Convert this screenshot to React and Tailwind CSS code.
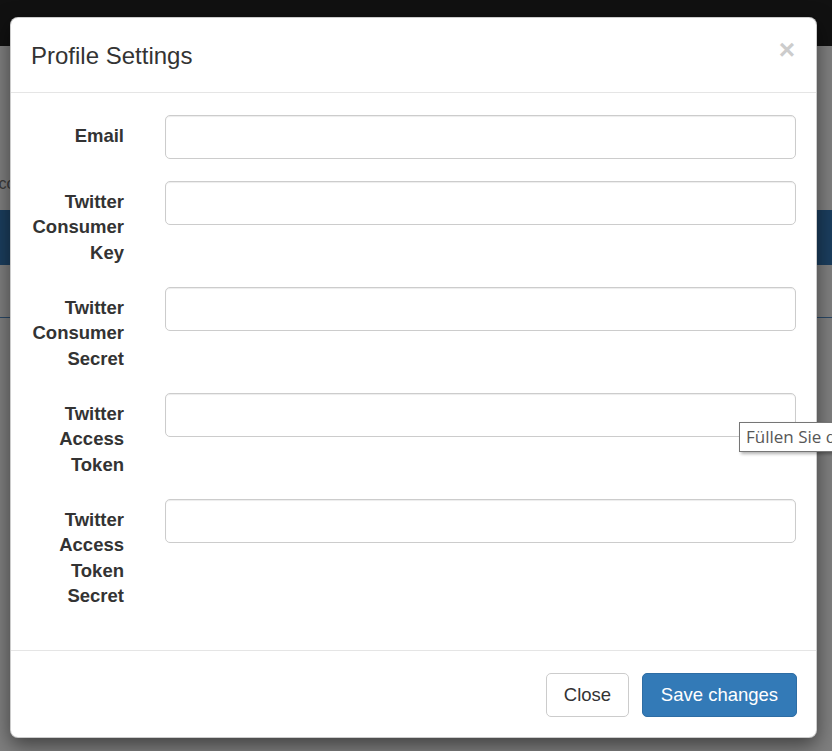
import React from 'react';

const FIELDS = [
  { id: 'email', lines: ['Email'] },
  { id: 'consumerKey', lines: ['Twitter', 'Consumer', 'Key'] },
  { id: 'consumerSecret', lines: ['Twitter', 'Consumer', 'Secret'] },
  { id: 'accessToken', lines: ['Twitter', 'Access', 'Token'] },
  { id: 'accessTokenSecret', lines: ['Twitter', 'Access', 'Token', 'Secret'] },
];

function Backdrop() {
  // dimmed page behind the modal
  return (
    <div className="flex flex-col w-full h-full bg-[#7f7f7f]">
      <div className="h-[46px] shrink-0 bg-[#111111]" />
      <div className="h-[127px] shrink-0" />
      <p className="h-[22px] shrink-0 -ml-[5px] text-[16px] leading-[22px] text-[#3a3a3a] whitespace-nowrap">ico</p>
      <div className="h-[15px] shrink-0" />
      <div className="h-[55px] shrink-0 bg-[#1b3e5e]" />
      <div className="h-[52px] shrink-0" />
      <div className="h-px shrink-0 bg-[#2a4866]" />
    </div>
  );
}

function FormRow({ field }) {
  return (
    <div className="flex items-start mb-[22px]">
      <label
        htmlFor={field.id}
        className="w-[93px] shrink-0 pt-[7.5px] text-right font-bold text-[18.5px] leading-[25.5px] text-[#333333]"
      >
        {field.lines.map(l => (
          <span key={l} className="block whitespace-nowrap">{l}</span>
        ))}
      </label>
      <input
        id={field.id}
        type="text"
        className="ml-[41px] flex-1 h-[44px] rounded-[5px] border border-[#cccccc] bg-white shadow-[inset_0_1px_1px_rgba(0,0,0,0.075)] outline-none"
      />
    </div>
  );
}

export default function App() {
  return (
    <div
      className="relative w-[832px] h-[751px] overflow-hidden"
      style={{ fontFamily: '"Liberation Sans", Arial, sans-serif' }}
    >
      <Backdrop />

      <div className="absolute left-[10px] top-[17px] w-[807px] bg-white rounded-[8px] border border-[rgba(0,0,0,0.2)] shadow-[0_7px_20px_rgba(0,0,0,0.5)] flex flex-col">
        <div className="flex items-start justify-between pl-[20px] pr-[21px] pt-[25px] pb-[23px] border-b border-[#e5e5e5]">
          <h4 className="text-[24px] leading-[26px] font-normal text-[#333333]">Profile Settings</h4>
          <button className="-mt-[7px] text-[28px] leading-[28px] font-bold text-[#cccccc]">×</button>
        </div>

        <div className="pl-[20px] pr-[20px] pt-[22px] pb-[19px]">
          {FIELDS.map(f => (
            <FormRow key={f.id} field={f} />
          ))}
        </div>

        <div className="flex justify-end gap-[13px] pr-[19px] pt-[22px] pb-[20px] border-t border-[#e5e5e5]">
          <button className="w-[83px] h-[44px] rounded-[5px] border border-[#cccccc] bg-white text-[18.5px] text-[#333333]">
            Close
          </button>
          <button className="w-[155px] h-[44px] rounded-[5px] border border-[#2e6da4] bg-[#337ab7] text-[18.5px] text-white">
            Save changes
          </button>
        </div>
      </div>

      <div
        className="absolute left-[739px] top-[422px] h-[30px] pl-[6px] pr-[8px] flex items-center bg-white border border-[#767676] shadow-[2px_2px_3px_rgba(0,0,0,0.3)] text-[17px] text-[#575757] whitespace-nowrap"
        style={{ fontFamily: '"Open Sans", "Noto Sans", sans-serif' }}
      >
        Füllen Sie dieses Feld aus.
      </div>
    </div>
  );
}
